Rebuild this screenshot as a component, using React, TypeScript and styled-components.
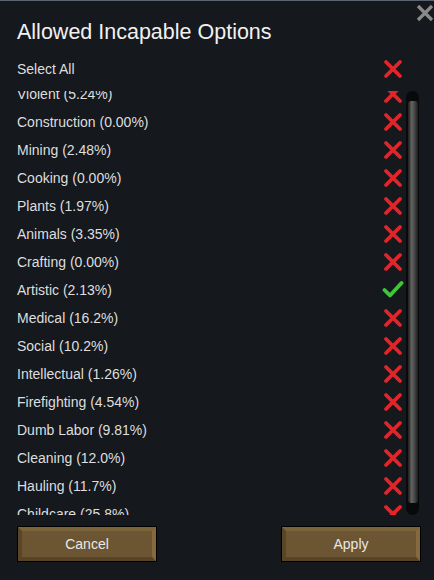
import { useLayoutEffect, useRef, useState } from "react";
import styled, { createGlobalStyle } from "styled-components";

const GlobalStyle = createGlobalStyle`
    html, body {
        margin: 0;
        padding: 0;
        background: #15181d;
    }
    body {
        font-family: "Liberation Sans", Arial, sans-serif;
    }
`;

const Window = styled.div`
    position: relative;
    box-sizing: border-box;
    height: 580px;
    width: 434px;
    overflow: hidden;
    border-top: 1px solid #5b6370;
    padding: 19px 13px 18px 17px;
    display: flex;
    flex-direction: column;
    background: #15181d;
`;

const CloseButton = styled.button`
    position: absolute;
    top: 3px;
    left: 415px;
    width: 20px;
    height: 18px;
    padding: 0;
    border: none;
    background: none;
    cursor: pointer;
`;

const Title = styled.h1`
    margin: 0;
    font-size: 21.5px;
    line-height: 24px;
    font-weight: normal;
    color: #f1f1f1;
`;

const Row = styled.div<{ $inset: number }>`
    display: flex;
    align-items: center;
    justify-content: space-between;
    height: 28px;
    padding-right: ${(p) => p.$inset}px;
    font-size: 14px;
    color: #dedede;
    flex-shrink: 0;
    white-space: nowrap;
`;

const SelectAllRow = styled(Row)`
    margin-top: 11px;
`;

const ListArea = styled.div`
    flex: 1;
    min-height: 0;
    margin-top: 8px;
    display: flex;
`;

const List = styled.div`
    flex: 1;
    overflow-y: scroll;
    scrollbar-width: none;
    &::-webkit-scrollbar {
        display: none;
    }
`;

const ScrollTrack = styled.div`
    position: relative;
    width: 13px;
    margin: 0 2px 0 2px;
    border-radius: 7px;
    background: #08090b;
`;

const ScrollThumb = styled.div`
    position: absolute;
    left: 2px;
    right: 1px;
    border-radius: 3px;
    background: linear-gradient(to right, #1f1f1f, #353535 15%, #626262 35%, #474747 65%, #2b2b2b 88%, #1a1a1a);
`;

const Footer = styled.div`
    display: flex;
    justify-content: space-between;
    margin-top: 11px;
    padding: 1px;
`;

const BevelButton = styled.button`
    box-sizing: border-box;
    width: 138px;
    height: 34px;
    outline: 1px solid #000;
    border-style: solid;
    border-width: 4px;
    border-color: #7b633a #86693c #574426 #5a4627;
    background: #6b5532;
    color: #e8e8e8;
    font-family: "Liberation Sans", Arial, sans-serif;
    font-size: 14px;
    padding: 0;
    cursor: pointer;
`;

function CrossIcon() {
    return (
        <svg width="20" height="20" viewBox="0 0 20 20">
            <path d="M3 3 L17 17 M17 3 L3 17" stroke="#e3252a" strokeWidth="3.8" strokeLinecap="round" fill="none" />
        </svg>
    );
}

function CheckIcon() {
    return (
        <svg width="22" height="20" viewBox="0 0 22 20" style={{ marginRight: -1 }}>
            <path d="M2.5 10 L8 15.5 L19.5 3" stroke="#3fc63a" strokeWidth="3.8" strokeLinecap="round" strokeLinejoin="round" fill="none" />
        </svg>
    );
}

const options = [
    { name: "Violent", pct: "5.24%" },
    { name: "Construction", pct: "0.00%" },
    { name: "Mining", pct: "2.48%" },
    { name: "Cooking", pct: "0.00%" },
    { name: "Plants", pct: "1.97%" },
    { name: "Animals", pct: "3.35%" },
    { name: "Crafting", pct: "0.00%" },
    { name: "Artistic", pct: "2.13%" },
    { name: "Medical", pct: "16.2%" },
    { name: "Social", pct: "10.2%" },
    { name: "Intellectual", pct: "1.26%" },
    { name: "Firefighting", pct: "4.54%" },
    { name: "Dumb Labor", pct: "9.81%" },
    { name: "Cleaning", pct: "12.0%" },
    { name: "Hauling", pct: "11.7%" },
    { name: "Childcare", pct: "25.8%" },
];

export default function App() {
    const listRef = useRef<HTMLDivElement>(null);
    const trackRef = useRef<HTMLDivElement>(null);
    const [allowed, setAllowed] = useState<string[]>(["Artistic"]);
    const [thumb, setThumb] = useState({ top: 0, height: 0 });

    const updateThumb = () => {
        const list = listRef.current;
        const track = trackRef.current;
        if (!list || !track) return;
        const trackH = track.clientHeight;
        const height = (trackH * list.clientHeight) / list.scrollHeight;
        const maxScroll = list.scrollHeight - list.clientHeight;
        const top = maxScroll > 0 ? (list.scrollTop / maxScroll) * (trackH - height) : 0;
        setThumb({ top, height });
    };

    // list in the screenshot is scrolled down a little
    useLayoutEffect(() => {
        if (listRef.current) listRef.current.scrollTop = 11;
        updateThumb();
    }, []);

    const toggle = (name: string) => {
        setAllowed(allowed.includes(name) ? allowed.filter((n) => n !== name) : [...allowed, name]);
    };

    return (
        <Window>
            <GlobalStyle />
            <CloseButton aria-label="Close">
                <svg width="20" height="18" viewBox="0 0 20 18">
                    <path d="M3 2 L17 16 M17 2 L3 16" stroke="#8a8a8a" strokeWidth="3.2" fill="none" />
                </svg>
            </CloseButton>
            <Title>Allowed Incapable Options</Title>
            <SelectAllRow $inset={18}>
                <span>Select All</span>
                {allowed.length === options.length ? <CheckIcon /> : <CrossIcon />}
            </SelectAllRow>
            <ListArea>
                <List ref={listRef} onScroll={updateThumb}>
                    {options.map((o) => (
                        <Row key={o.name} $inset={1} onClick={() => toggle(o.name)}>
                            <span>
                                {o.name} ({o.pct})
                            </span>
                            {allowed.includes(o.name) ? <CheckIcon /> : <CrossIcon />}
                        </Row>
                    ))}
                </List>
                <ScrollTrack ref={trackRef}>
                    <ScrollThumb style={{ top: thumb.top, height: thumb.height }} />
                </ScrollTrack>
            </ListArea>
            <Footer>
                <BevelButton>Cancel</BevelButton>
                <BevelButton>Apply</BevelButton>
            </Footer>
        </Window>
    );
}
